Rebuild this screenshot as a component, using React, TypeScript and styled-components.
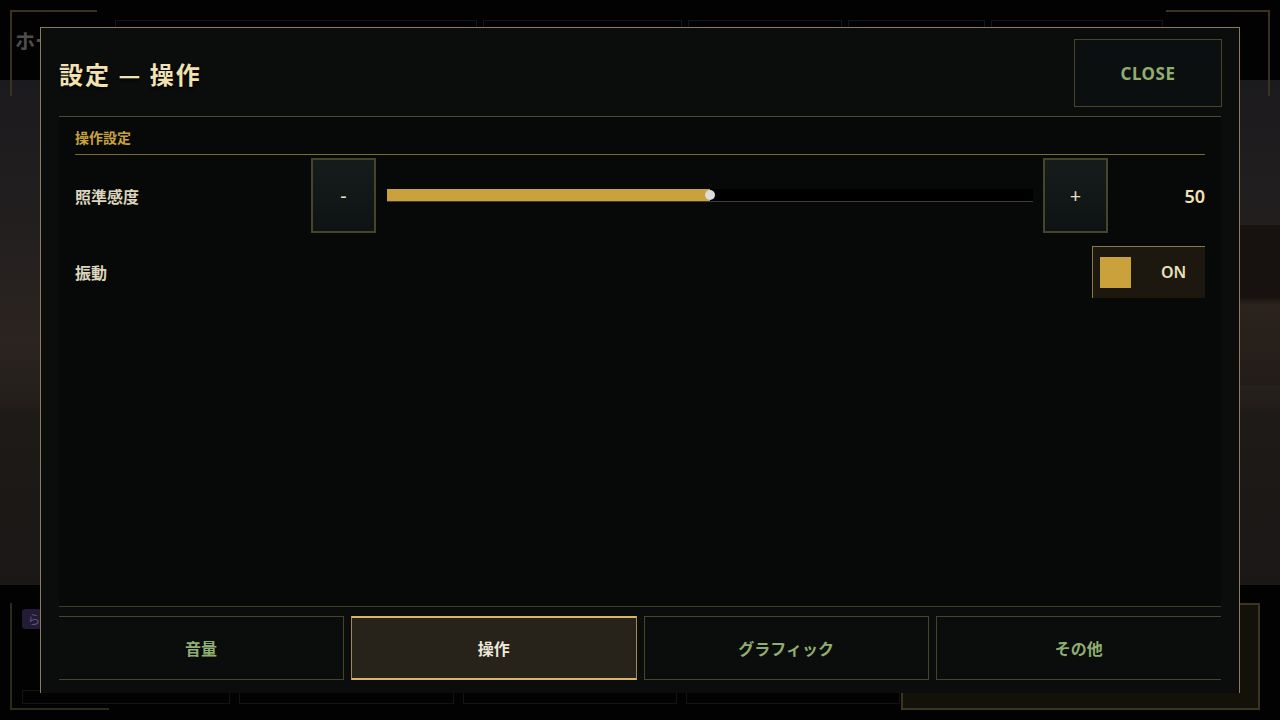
import React, { useState } from "react";
import styled, { createGlobalStyle, css } from "styled-components";

const colors = {
  black: "#000000",
  panel: "#0b0d0d",
  content: "#070909",
  frame: "#8c7a58",
  line: "#4d4630",
  olive: "#45452c",
  gold: "#c9a23c",
  goldLight: "#d8b868",
  cream: "#f2e2b2",
  text: "#ddd5bd",
  green: "#8fae70",
};

const GlobalStyle = createGlobalStyle`
  html, body {
    margin: 0;
    padding: 0;
    background: #000;
  }
  body {
    font-family: "Noto Sans CJK JP", "Noto Sans", sans-serif;
  }
`;

const tabs = ["音量", "操作", "グラフィック", "その他"];
const hudSlots = [360, 197, 152, 135, 170];
const bottomSlots = [206, 213, 212, 212];

export default function App() {
  const [sensitivity, setSensitivity] = useState(50);
  const [vibration, setVibration] = useState(true);
  const [activeTab, setActiveTab] = useState(1);

  const step = (delta: number) => {
    setSensitivity((v) => Math.max(0, Math.min(100, v + delta)));
  };

  return (
    <>
      <GlobalStyle />
      <Page>
        <TopHud>
          <Bracket>
            <HudLabel>ホーム</HudLabel>
          </Bracket>
          <HudSlots>
            {hudSlots.map((w, i) => (
              <HudSlot key={i} $width={w} />
            ))}
          </HudSlots>
          <Bracket $right />
        </TopHud>
        <SceneArea>
          <SceneBlock />
        </SceneArea>
        <BottomHud>
          <BottomLeft>
            <Badge>ら</Badge>
            <BottomSlots>
              {bottomSlots.map((w, i) => (
                <BottomSlot key={i} $width={w} />
              ))}
            </BottomSlots>
          </BottomLeft>
          <ActionBox />
        </BottomHud>

        <Modal>
          <Header>
            <Title>設定 — 操作</Title>
            <CloseButton>CLOSE</CloseButton>
          </Header>

          <Content>
            <SectionTitle>操作設定</SectionTitle>

            <SettingRow>
              <RowLabel>照準感度</RowLabel>
              <StepButton onClick={() => step(-5)}>-</StepButton>
              <SliderTrack>
                <SliderFill style={{ width: `${sensitivity}%` }}>
                  <SliderThumb />
                </SliderFill>
              </SliderTrack>
              <StepButton onClick={() => step(5)}>+</StepButton>
              <Value>{sensitivity}</Value>
            </SettingRow>

            <ToggleRow>
              <RowLabel>振動</RowLabel>
              <Toggle onClick={() => setVibration(!vibration)}>
                <ToggleKnob $on={vibration} />
                <ToggleText>{vibration ? "ON" : "OFF"}</ToggleText>
              </Toggle>
            </ToggleRow>
          </Content>

          <TabBar>
            {tabs.map((label, i) => (
              <Tab
                key={label}
                $active={i === activeTab}
                $first={i === 0}
                $last={i === tabs.length - 1}
                onClick={() => setActiveTab(i)}
              >
                {label}
              </Tab>
            ))}
          </TabBar>
        </Modal>
      </Page>
    </>
  );
}

const Page = styled.div`
  position: relative;
  width: 1280px;
  height: 720px;
  overflow: hidden;
  background: ${colors.black};
  display: flex;
  flex-direction: column;
`;

const TopHud = styled.div`
  height: 80px;
  padding: 10px 10px 0;
  box-sizing: border-box;
  display: flex;
  align-items: flex-start;
  justify-content: space-between;
  background: #020202;
  position: relative;
  z-index: 1;
`;

const Bracket = styled.div<{ $right?: boolean }>`
  width: ${(p) => (p.$right ? "104px" : "87px")};
  height: 86px;
  box-sizing: border-box;
  border-top: 2px solid #3a3122;
  ${(p) =>
    p.$right
      ? css`
          border-right: 2px solid #3a3122;
        `
      : css`
          border-left: 2px solid #3a3122;
        `}
`;

const HudLabel = styled.div`
  margin: 14px 0 0 3px;
  color: #4e4e4e;
  font-size: 20px;
  font-weight: 700;
  white-space: nowrap;
`;

const HudSlots = styled.div`
  flex: 1;
  display: flex;
  gap: 6px;
  margin: 10px 0 0 18px;
`;

const HudSlot = styled.div<{ $width: number }>`
  width: ${(p) => p.$width}px;
  height: 60px;
  border: 1px solid #15151c;
`;

const SceneArea = styled.div`
  flex: 1;
  background: linear-gradient(
    180deg,
    #1b1a1d 0%,
    #231f1f 30%,
    #2b2420 52%,
    #231e1b 64%,
    #1d1a18 66%,
    #1a1716 100%
  );
  display: flex;
  justify-content: flex-end;
  padding-top: 145px;
`;

const SceneBlock = styled.div`
  width: 40px;
  height: 160px;
  background: linear-gradient(180deg, #17120f 0%, #17120f 45%, #2c231d 50%, #221c18 100%);
`;

const BottomHud = styled.div`
  height: 135px;
  padding: 18px 20px 10px 10px;
  box-sizing: border-box;
  display: flex;
  justify-content: space-between;
  align-items: stretch;
  background: #020202;
`;

const BottomLeft = styled.div`
  width: 87px;
  border-left: 2px solid #2e2a1a;
  border-bottom: 2px solid #2e2a1a;
  padding: 6px 0 0 10px;
  display: flex;
  flex-direction: column;
  justify-content: space-between;
`;

const Badge = styled.div`
  width: 24px;
  height: 20px;
  border-radius: 3px;
  background: #241c34;
  color: #5e4e7e;
  font-size: 13px;
  text-align: center;
  line-height: 20px;
`;

const BottomSlots = styled.div`
  display: flex;
  gap: 9px;
  margin-bottom: 4px;
`;

const BottomSlot = styled.div<{ $width: number }>`
  flex-shrink: 0;
  width: ${(p) => p.$width}px;
  height: 12px;
  border: 1px solid #141414;
`;

const ActionBox = styled.div`
  width: 355px;
  border: 2px solid #3a3420;
  background: #141108;
`;

const Modal = styled.div`
  position: absolute;
  top: 27px;
  left: 40px;
  width: 1200px;
  height: 666px;
  box-sizing: border-box;
  background: ${colors.panel};
  border: 1px solid ${colors.frame};
  border-bottom: none;
  padding: 0 18px 13px;
  display: flex;
  flex-direction: column;
  z-index: 2;
`;

const Header = styled.div`
  display: flex;
  align-items: center;
  justify-content: space-between;
  padding: 11px 0 9px 0;
  border-bottom: 1px solid ${colors.line};
`;

const Title = styled.h1`
  margin: 0;
  color: ${colors.cream};
  font-size: 24px;
  font-weight: 700;
  letter-spacing: 2px;
  text-shadow: 0 2px 3px rgba(0, 0, 0, 0.9);
`;

const CloseButton = styled.button`
  width: 148px;
  height: 68px;
  margin-right: -1px;
  background: #0c0f0f;
  border: 1px solid ${colors.olive};
  color: ${colors.green};
  font-family: "Noto Sans", sans-serif;
  font-size: 17px;
  font-weight: 700;
  letter-spacing: 0.5px;
  cursor: pointer;
`;

const Content = styled.div`
  flex: 1;
  background: ${colors.content};
  padding: 0 16px;
  display: flex;
  flex-direction: column;
`;

const SectionTitle = styled.div`
  padding: 10px 0 7px;
  line-height: 20px;
  color: ${colors.gold};
  font-size: 14px;
  font-weight: 700;
  border-bottom: 1px solid #7a6a3a;
`;

const SettingRow = styled.div`
  display: flex;
  align-items: center;
  margin-top: 3px;
  height: 75px;
`;

const ToggleRow = styled.div`
  display: flex;
  align-items: center;
  justify-content: space-between;
  margin-top: 13px;
  height: 52px;
`;

const RowLabel = styled.div`
  width: 236px;
  color: ${colors.text};
  font-size: 16px;
  font-weight: 700;
`;

const StepButton = styled.button`
  width: 65px;
  height: 75px;
  flex-shrink: 0;
  background: linear-gradient(180deg, #161c1c 0%, #0e1212 100%);
  border: 2px solid ${colors.olive};
  color: #e6dcc2;
  font-family: "Noto Sans", sans-serif;
  font-size: 20px;
  cursor: pointer;
`;

const SliderTrack = styled.div`
  flex: 1;
  height: 12px;
  margin: 0 10px 0 11px;
  background: #000;
  border-bottom: 1px solid #3c3c3c;
  position: relative;
`;

const SliderFill = styled.div`
  height: 100%;
  background: ${colors.gold};
  position: relative;
`;

const SliderThumb = styled.div`
  position: absolute;
  right: -5px;
  top: 1px;
  width: 10px;
  height: 10px;
  border-radius: 50%;
  background: #dcdcdc;
`;

const Value = styled.div`
  width: 97px;
  flex-shrink: 0;
  text-align: right;
  color: ${colors.cream};
  font-family: "Noto Sans", sans-serif;
  font-size: 18px;
  font-weight: 600;
`;

const Toggle = styled.div`
  width: 113px;
  height: 52px;
  box-sizing: border-box;
  background: #1c1810;
  border-top: 1px solid #8a7848;
  border-left: 1px solid #8a7848;
  padding: 10px 0 0 7px;
  display: flex;
  align-items: flex-start;
  cursor: pointer;
`;

const ToggleKnob = styled.div<{ $on: boolean }>`
  width: 31px;
  height: 31px;
  background: ${(p) => (p.$on ? colors.gold : "#3a3a3a")};
`;

const ToggleText = styled.div`
  margin: 4px 0 0 30px;
  color: #ece0bc;
  font-family: "Noto Sans", sans-serif;
  font-size: 16px;
  font-weight: 600;
`;

const TabBar = styled.div`
  border-top: 1px solid #3e3c28;
  padding-top: 9px;
  display: grid;
  grid-template-columns: repeat(4, 1fr);
  gap: 7px;
`;

const Tab = styled.button<{ $active: boolean; $first: boolean; $last: boolean }>`
  height: 64px;
  background: ${(p) => (p.$active ? "#27221a" : "transparent")};
  border: 1px solid ${colors.olive};
  ${(p) => p.$first && "border-left: none;"}
  ${(p) => p.$last && "border-right: none;"}
  ${(p) =>
    p.$active &&
    css`
      border: 1px solid #a08850;
      border-top: 2px solid ${colors.goldLight};
      border-bottom: 2px solid ${colors.goldLight};
    `}
  color: ${(p) => (p.$active ? "#ece8dc" : colors.green)};
  font-family: "Noto Sans CJK JP", sans-serif;
  font-size: 16px;
  font-weight: 700;
  cursor: pointer;
`;
